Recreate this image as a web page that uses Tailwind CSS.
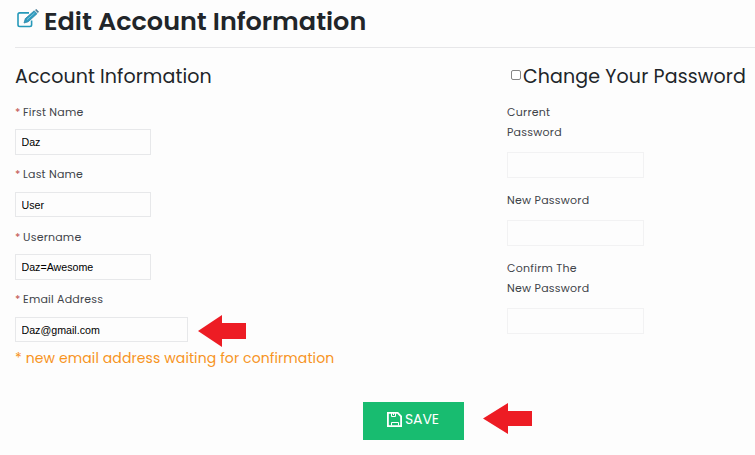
<!DOCTYPE html>
<html lang="en">
<head>
  <meta charset="UTF-8">
  <meta name="viewport" content="width=device-width, initial-scale=1.0">
  <title>Edit Account Information</title>
  <script src="https://cdn.jsdelivr.net/npm/@tailwindcss/browser@4"></script>
</head>
<body class="bg-[#fdfdfd] h-[455px] overflow-hidden pl-[15px] font-[Poppins,Inter,sans-serif] text-[#212529]">
  <header class="flex h-12 border-b border-[#e7e7e9] pt-[9px]">
    <svg class="w-[23px] h-5 shrink-0 ml-[2px]" viewBox="0 0 23 20" fill="none">
      <path d="M12 3.9H2.7Q1 3.9 1 5.6V15.8Q1 17.5 2.7 17.5H12.9Q14.6 17.5 14.6 15.8V11.5" stroke="#2699b9" stroke-width="1.6"/>
      <path d="M7 14L8.3 9.6L17.2 1.8L20 4.7L11.2 12.8Z" fill="#2f9cc0" stroke="#2f86a8" stroke-width=".8"/>
      <path d="M10 10.6L17.6 3.9" stroke="#a9d8e6" stroke-width=".7"/>
      <path d="M18 1.1L19.3 0L22 2.7L20.8 3.9Z" fill="#4d7f99"/>
    </svg>
    <h1 class="ml-[4px] -mt-[3px] text-[25.5px] leading-[30px] font-semibold whitespace-nowrap">Edit Account Information</h1>
  </header>

  <main class="flex">
    <section class="w-[492px] shrink-0">
      <h2 class="pt-[14px] h-[54px] text-[19px] leading-[30px] tracking-[0.09px] whitespace-nowrap">Account Information</h2>
      <form class="text-[#3f444a]">
        <div class="h-[62px]">
          <label class="block h-[27px] text-[11px] leading-5 tracking-[0.2px]"><span class="text-[#c0504d] -mr-[0.6px]">*</span> First Name</label>
          <input class="block w-[136px] h-[26px] border border-[#e7e8ea] px-[5.5px] font-['Liberation_Sans',sans-serif] text-[10.67px] text-black" value="Daz">
        </div>
        <div class="h-[63px]">
          <label class="block h-[28px] text-[11px] leading-5 tracking-[0.2px]"><span class="text-[#c0504d] -mr-[0.6px]">*</span> Last Name</label>
          <input class="block w-[136px] h-[25px] border border-[#e7e8ea] px-[5.5px] font-['Liberation_Sans',sans-serif] text-[10.67px] text-black" value="User">
        </div>
        <div class="h-[62px]">
          <label class="block h-[27px] text-[11px] leading-5 tracking-[0.2px]"><span class="text-[#c0504d] -mr-[0.6px]">*</span> Username</label>
          <input class="block w-[136px] h-[26px] border border-[#e7e8ea] px-[5.5px] font-['Liberation_Sans',sans-serif] text-[10.67px] text-black" value="Daz=Awesome">
        </div>
        <div>
          <label class="block h-[28px] text-[11px] leading-5 tracking-[0.2px]"><span class="text-[#c0504d] -mr-[0.6px]">*</span> Email Address</label>
          <div class="flex h-[26px] items-start">
            <input class="block w-[173px] h-[25px] border border-[#e7e8ea] px-[5.5px] font-['Liberation_Sans',sans-serif] text-[10.67px] text-black" value="Daz@gmail.com">
            <svg class="ml-[10px] -mt-[2px] w-12 h-8 shrink-0" viewBox="0 0 48 32"><path d="M0 16L24 0V8H48V24H24V32Z" fill="#ed1c24"/></svg>
          </div>
          <p class="mt-[5px] text-[14px] leading-5 tracking-[0.1px] text-[#f7941d] whitespace-nowrap">* new email address waiting for confirmation</p>
        </div>
      </form>
    </section>

    <section class="w-[248px] shrink-0">
      <h2 class="flex pt-[14px] h-[54px] text-[19px] leading-[30px] tracking-[0.12px] whitespace-nowrap">
        <input type="checkbox" class="appearance-none shrink-0 ml-1 mt-2 mr-[2px] size-[10px] rounded-[2px] border border-[#858585] bg-white">Change Your Password
      </h2>
      <div class="text-[11px] leading-5 tracking-[0.25px] text-[#3f444a]">
        <label class="block">Current<br>Password</label>
        <input type="password" class="block mt-[10px] w-[137px] h-[26px] border border-[#f2f2f3]">
        <label class="block mt-3">New Password</label>
        <input type="password" class="block mt-[10px] w-[137px] h-[26px] border border-[#f2f2f3]">
        <label class="block mt-3">Confirm The<br>New Password</label>
        <input type="password" class="block mt-[10px] w-[137px] h-[26px] border border-[#f2f2f3]">
      </div>
    </section>
  </main>

  <div class="flex mt-[34px] pl-[348px]">
    <button class="flex w-[101px] h-[38px] items-center bg-[#18bc70] pl-6 text-[14px] text-white">
      <svg class="w-[15px] h-[15px] mr-[3px] mt-[-3px] shrink-0" viewBox="0 0 15 15" fill="none" stroke="#fff">
        <path d="M.9 .9H10.7L14.1 4.3V14.1H.9Z" stroke-width="1.8"/>
        <path d="M4.5 1V4.5H8.5V1M6.5 1V3" stroke-width="1"/>
        <path d="M4.5 13.5V10.5H11.5V13.5" stroke-width="1"/>
      </svg>
      <span class="-mt-[3px] tracking-[-0.1px]">SAVE</span>
    </button>
    <svg class="ml-[19px] mt-[1px] w-[49px] h-[31px]" viewBox="0 0 49 31"><path d="M0 15.5L25 0V8H49V23H25V31Z" fill="#ed1c24"/></svg>
  </div>
</body>
</html>
